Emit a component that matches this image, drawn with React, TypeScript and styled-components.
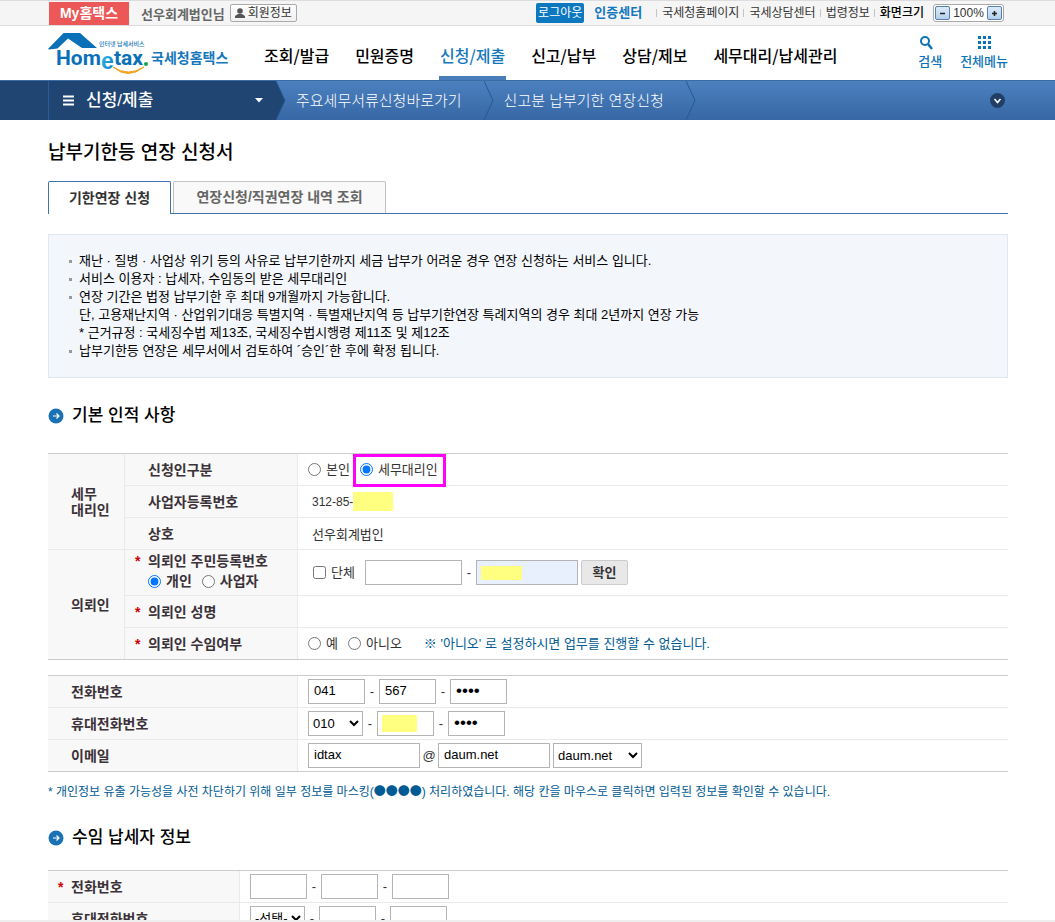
import React from 'react';
import styled, { createGlobalStyle, css } from 'styled-components';

const Global = createGlobalStyle`
  *, *::before, *::after { box-sizing: border-box; }
  html, body { margin: 0; background: #fff; }
  body, input, select, button {
    font-family: "Liberation Sans", "Noto Sans CJK KR", sans-serif;
    font-size: 13px;
    color: #333;
  }
  a { color: inherit; text-decoration: none; }
  h1, h2, ul, p { margin: 0; padding: 0; }
`;

const Shell = styled.div`
  display: flex;
  flex-direction: column;
  height: 100vh;
`;

const Scroll = styled.div`
  flex: 1;
  min-height: 0;
  overflow-y: auto;
  scrollbar-width: none;
  border-bottom: 2px solid #eeeeee;
`;

/* utility bar */

const TopBar = styled.div`
  display: flex;
  align-items: center;
  height: 26px;
  padding: 0 51px 0 49px;
  border-top: 1px solid #dddde0;
  border-bottom: 1px solid #dcdcde;
  background: #f5f5f5;
  font-size: 12px;
  line-height: 18px;
  white-space: nowrap;
`;

const MyBadge = styled.a`
  align-self: flex-end;
  width: 80px;
  height: 23px;
  background: #ec5757;
  color: #fff;
  font-size: 14px;
  font-weight: 700;
  line-height: 23px;
  text-align: center;
`;

const UserName = styled.span`
  margin: 4px 5px 0 12px;
  color: #666;
  font-size: 13px;
  font-weight: 700;
`;

const MemberButton = styled.button`
  display: flex;
  align-items: center;
  gap: 3px;
  height: 18px;
  padding: 0 4px;
  border: 1px solid #aaa;
  border-radius: 2px;
  background: linear-gradient(#fff, #f0f0f0);
  font-size: 12px;
  line-height: 16px;
`;

const TopRight = styled.div`
  display: flex;
  align-items: center;
  margin-left: auto;
`;

const Logout = styled.button`
  height: 20px;
  padding: 0 2px;
  border: 0;
  border-radius: 2px;
  background: #0d78bf;
  color: #fff;
  font-size: 12px;
  line-height: 20px;
`;

const CertLink = styled.a`
  margin: 0 10px;
  color: #1478bd;
  font-size: 13px;
  font-weight: 700;
`;

const TopLink = styled.a`
  display: flex;
  align-items: center;
  &::before {
    content: '';
    width: 1px;
    height: 8px;
    margin: 0 5px 0 4px;
    background: #c4c4c4;
  }
`;

const SizeLabel = styled(TopLink).attrs({ as: 'span' })`
  color: #000;
  font-weight: 500;
`;

const ZoomBox = styled.div`
  display: flex;
  align-items: center;
  justify-content: space-between;
  width: 71px;
  height: 18px;
  margin-left: 9px;
  padding: 0 1px;
  border: 1px solid #aaa;
  border-radius: 3px;
  background: #fff;
  line-height: 16px;
`;

const ZoomButton = styled.button`
  display: flex;
  align-items: center;
  justify-content: center;
  width: 15px;
  height: 14px;
  padding: 0;
  border: 1px solid #5a7fae;
  border-radius: 2px;
  background: linear-gradient(#dcebfa, #b4d0ee);
`;

/* main header */

const Header = styled.header`
  display: flex;
  height: 54px;
  padding: 0 47px 0 48px;
  white-space: nowrap;
`;

const LogoLink = styled.a`
  display: block;
  width: 180px;
  margin-right: 35px;
`;

const MainNav = styled.nav`
  display: flex;
  gap: 24px;
`;

const NavLink = styled.a<{ $active?: boolean }>`
  padding: 17px 1px 0;
  border-bottom: 4px solid ${(p) => (p.$active ? '#4a7ebb' : 'transparent')};
  color: ${(p) => (p.$active ? '#1478bd' : '#000')};
  font-family: "Noto Sans CJK KR", sans-serif;
  font-size: 16px;
  font-weight: 500;
  line-height: 24px;
`;

const Tools = styled.div`
  display: flex;
  gap: 18px;
  margin-left: auto;
`;

const Tool = styled.button`
  display: flex;
  flex-direction: column;
  align-items: center;
  gap: 2px;
  padding: 9px 0 0;
  border: 0;
  background: none;
  color: #0d73b8;
  font-weight: 500;
  line-height: 18px;
  svg { display: block; }
`;

/* location bar */

const CrumbBar = styled.nav`
  display: flex;
  height: 40px;
  border-top: 1px solid #3a6ba5;
  background: linear-gradient(#4b80bf, #3867a5);
  color: #fff;
  white-space: nowrap;
`;

const CrumbHome = styled.div`
  display: flex;
  width: 276px;
  padding-left: 48px;
  background: #204572;
`;

const CrumbMenu = styled.button`
  display: flex;
  flex: 1;
  align-items: center;
  padding: 0 13px 0 14px;
  border: 0;
  border-left: 1px solid #2b5a94;
  background: none;
  color: #fff;
  font-size: 17px;
  font-weight: 500;
  line-height: 38px;
`;

const MenuTitle = styled.span`
  margin: 0 auto 0 12px;
`;

const Crumb = styled.a`
  display: flex;
  align-items: center;
  padding: 0 22px 0 10px;
  font-size: 15px;
  font-weight: 300;
  line-height: 38px;
`;

const ExpandButton = styled.button`
  margin-left: auto;
  margin-right: 50px;
  padding: 0;
  border: 0;
  background: none;
  svg { display: block; }
`;

/* page content */

const Content = styled.main`
  padding: 0 47px 0 48px;
`;

const PageTitle = styled.h1`
  padding-top: 20px;
  color: #000;
  font-size: 19px;
  font-weight: 500;
  line-height: 26px;
`;

const Tabs = styled.div`
  display: flex;
  gap: 2px;
  margin-top: 15px;
  border-bottom: 1px solid #3f74b0;
`;

const Tab = styled.button<{ $w: number; $active?: boolean }>`
  min-width: ${(p) => p.$w}px;
  height: 32px;
  padding: 0 10px;
  border: 1px solid #c4c4c4;
  border-bottom: 0;
  border-radius: 2px 2px 0 0;
  background: #f9f9f9;
  color: #666;
  font-size: 14px;
  font-weight: 700;
  line-height: 31px;
  ${(p) =>
    p.$active &&
    css`
      height: 33px;
      margin-bottom: -1px;
      border-color: #3f74b0;
      background: #fff;
      color: #333;
    `}
`;

const InfoBox = styled.ul`
  margin-top: 20px;
  padding: 17px 20px;
  border: 1px solid #dfe7f0;
  background: #f3f7fc;
  list-style: none;
`;

const InfoItem = styled.li`
  display: flex;
  color: #000;
  line-height: 18px;
  &::before {
    content: '';
    width: 3px;
    height: 3px;
    margin: 8px 7px 0 0;
    background: #999;
  }
`;

const SectionTitle = styled.h2`
  display: flex;
  align-items: center;
  gap: 8px;
  color: #000;
  font-size: 17px;
  font-weight: 500;
  line-height: 24px;
`;

const FormTable = styled.table`
  width: 100%;
  border-collapse: separate;
  border-spacing: 0;
  border-top: 1px solid #ccc;
  border-bottom: 1px solid #ccc;
  table-layout: fixed;
  tr:last-child > th, tr:last-child > td {
    height: 31px;
    border-bottom: 0;
  }
  th[data-last] { border-bottom: 0; }
`;

const Col = styled.col<{ $w: number }>`
  width: ${(p) => p.$w}px;
`;

const cell = css`
  height: 32px;
  border-bottom: 1px solid #eaeaea;
  text-align: left;
`;

const GroupHead = styled.th`
  ${cell}
  padding: 0 0 0 23px;
  background: #f8f8f8;
  color: #3b3239;
  font-size: 14px;
  line-height: 16px;
`;

const RowHead = styled.th<{ $lined?: boolean; $tall?: boolean }>`
  ${cell}
  padding: 0 0 0 23px;
  border-left: ${(p) => (p.$lined ? '1px solid #eaeaea' : '0')};
  background: #f8f8f8;
  color: #3b3239;
  font-size: 14px;
  line-height: 20px;
  ${(p) => p.$tall && 'height: 46px; padding-bottom: 3px;'}
`;

const Cell = styled.td<{ $pad?: number }>`
  ${cell}
  padding: 0 0 0 ${(p) => p.$pad ?? 10}px;
  border-left: 1px solid #eaeaea;
`;

const Required = styled.span`
  display: inline-block;
  width: 13px;
  margin-left: -13px;
  color: #d00000;
`;

const Line = styled.div<{ $gap?: number; $small?: boolean }>`
  display: flex;
  align-items: center;
  gap: ${(p) => p.$gap ?? 0}px;
  font-size: ${(p) => (p.$small ? '12px' : 'inherit')};
  line-height: 20px;
`;

const Choice = styled.label<{ $marked?: boolean }>`
  display: flex;
  align-items: center;
  gap: 5px;
  input { width: 13px; height: 13px; margin: 0; }
  ${(p) =>
    p.$marked &&
    css`
      position: relative;
      &::after {
        content: '';
        position: absolute;
        inset: -6px -8px -7px -7px;
        border: 3px solid #ff00f8;
      }
    `}
`;

const Field = styled.input<{ $w: number; $filled?: boolean }>`
  width: ${(p) => p.$w}px;
  height: 25px;
  padding: 0 5px 2px;
  border: 1px solid #b4b4b4;
  border-radius: 0;
  background: ${(p) => (p.$filled ? '#e8f0fe' : '#fff')};
  color: #000;
  &[type='password'] { font-size: 17px; }
`;

const Picker = styled.select<{ $w: number }>`
  width: ${(p) => p.$w}px;
  height: 25px;
  padding: 0;
  border: 1px solid #b4b4b4;
  border-radius: 0;
  background: #fff;
  color: #000;
`;

const Sep = styled.span<{ $w?: number }>`
  width: ${(p) => p.$w ?? 14}px;
  text-align: center;
  line-height: 20px;
`;

const Masked = styled.span`
  position: relative;
  display: flex;
  align-items: center;
`;

const Mask = styled.span<{ $w: number; $h: number }>`
  width: ${(p) => p.$w}px;
  height: ${(p) => p.$h}px;
  background: #ffff80;
  ${Masked} & {
    position: absolute;
    left: 5px;
  }
`;

const ConfirmButton = styled.button`
  width: 47px;
  height: 25px;
  margin-left: 3px;
  padding: 0 0 2px;
  border: 1px solid #ccc;
  border-radius: 2px;
  background: #e8e8e8;
  font-weight: 700;
`;

const Hint = styled.span`
  margin-left: 12px;
  color: #005b94;
`;

const Note = styled.p`
  padding: 9px 0 0;
  color: #005b94;
  font-size: 12px;
  line-height: 20px;
`;

const Dots = styled.span`
  font-family: "Noto Sans CJK KR", sans-serif;
`;

const Stack = styled.div<{ $top: number }>`
  margin-top: ${(p) => p.$top}px;
`;

const Logo = () => (
  <svg width="180" height="54" viewBox="0 0 180 54" role="img" aria-label="Hometax">
    <defs>
      <linearGradient id="e" x1="0" y1="0" x2="1" y2="1">
        <stop offset="0" stopColor="#35c3ee" />
        <stop offset="1" stopColor="#0a78c0" />
      </linearGradient>
    </defs>
    <path d="M0 23 15.500 7H32L49 22H34L20 12.500 9.500 22.500 1 23.500Z" fill="#0a70b8" />
    <g fontFamily="Roboto, sans-serif" fontWeight="700" fontSize="21" fill="#0a70b8">
      <text x="8" y="39">Hom</text>
      <text x="66" y="39">tax</text>
    </g>
    <text x="53" y="43" fontFamily="'Liberation Sans', sans-serif" fontWeight="700" fontSize="23" fill="url(#e)">e</text>
    <circle cx="98" cy="38" r="2" fill="#18a34a" />
    <path d="M65 41Q80 54 96 41Q80 51 65 41Z" fill="#f5a21c" stroke="#f5a21c" />
    <g fontFamily="'Noto Sans CJK KR', sans-serif" fill="#1577bb">
      <text x="51" y="20" fontSize="6" fontWeight="500">인터넷 납세서비스</text>
      <text x="103" y="37" fontSize="14" fontWeight="700">국세청홈택스</text>
    </g>
  </svg>
);

const Chevron = ({ first }: { first?: boolean }) => (
  <svg width="10" height="39" viewBox="0 0 10 39">
    {first && <path d="M0 0 9 19.500 0 39Z" fill="#204572" />}
    <path d="M0 0 9 19.500 0 39" fill="none" stroke="#235a92" />
  </svg>
);

const ArrowBullet = () => (
  <svg width="16" height="16" viewBox="0 0 16 16">
    <circle cx="8" cy="8" r="7.500" fill="#1a72b4" />
    <path d="M5 8H10.500M8.500 5.500 11 8 8.500 10.500" fill="none" stroke="#fff" strokeWidth="1.200" />
  </svg>
);

const Phone = ({ name, values }: { name: string; values: string[] }) => (
  <Line>
    <Field $w={57} aria-label={`${name} 1`} defaultValue={values[0]} />
    <Sep>-</Sep>
    <Field $w={57} aria-label={`${name} 2`} defaultValue={values[1]} />
    <Sep>-</Sep>
    <Field $w={57} type="password" aria-label={`${name} 3`} defaultValue={values[2]} />
  </Line>
);

const links = ['국세청홈페이지', '국세상담센터', '법령정보'];
const menus = ['조회/발급', '민원증명', '신청/제출', '신고/납부', '상담/제보', '세무대리/납세관리'];

export default function App() {
  return (
    <Shell>
      <Global />
      <Scroll>
        <TopBar>
          <MyBadge href="#">My홈택스</MyBadge>
          <UserName>선우회계법인님</UserName>
          <MemberButton>
            <svg width="10" height="10" viewBox="0 0 10 10" fill="#555">
              <circle cx="5" cy="3" r="2.800" />
              <path d="M0 10V8L3 6H7L10 8V10Z" />
            </svg>
            회원정보
          </MemberButton>
          <TopRight>
            <Logout>로그아웃</Logout>
            <CertLink href="#">인증센터</CertLink>
            {links.map((l) => (
              <TopLink href="#" key={l}>{l}</TopLink>
            ))}
            <SizeLabel>화면크기</SizeLabel>
            <ZoomBox>
              <ZoomButton aria-label="축소">
                <svg width="7" height="7"><path d="M1 3.500H6" stroke="#222" strokeWidth="1.500" /></svg>
              </ZoomButton>
              100%
              <ZoomButton aria-label="확대">
                <svg width="7" height="7"><path d="M1 3.500H6M3.500 1V6" stroke="#222" strokeWidth="1.500" /></svg>
              </ZoomButton>
            </ZoomBox>
          </TopRight>
        </TopBar>

        <Header>
          <LogoLink href="#"><Logo /></LogoLink>
          <MainNav>
            {menus.map((m) => (
              <NavLink href="#" key={m} $active={m === '신청/제출'}>{m}</NavLink>
            ))}
          </MainNav>
          <Tools>
            <Tool>
              <svg width="24" height="16" viewBox="0 0 24 16" fill="none" stroke="#0d73b8">
                <circle cx="7" cy="6" r="4" strokeWidth="2" />
                <path d="M10 9 14 14" strokeWidth="2.500" />
              </svg>
              검색
            </Tool>
            <Tool>
              <svg width="13" height="16" viewBox="0 0 13 16" fill="#0d73b8">
                {[1, 6, 11].map((y) => [0, 5, 10].map((x) => (
                  <rect key={`${x}-${y}`} x={x} y={y} width="3" height="3" />
                )))}
              </svg>
              전체메뉴
            </Tool>
          </Tools>
        </Header>

        <CrumbBar>
          <CrumbHome>
            <CrumbMenu>
              <svg width="11" height="11"><path d="M0 1.500H11M0 5.500H11M0 9.500H11" stroke="#fff" strokeWidth="2" /></svg>
              <MenuTitle>신청/제출</MenuTitle>
              <svg width="8" height="5"><path d="M0 0H8L4 4.500Z" fill="#fff" /></svg>
            </CrumbMenu>
          </CrumbHome>
          <Chevron first />
          <Crumb href="#">주요세무서류신청바로가기</Crumb>
          <Chevron />
          <Crumb href="#">신고분 납부기한 연장신청</Crumb>
          <Chevron />
          <ExpandButton aria-label="펼치기">
            <svg width="15" height="15" viewBox="0 0 15 15">
              <circle cx="7.500" cy="7.500" r="7.500" fill="#213f66" />
              <path d="M4.500 6 7.500 9.500 10.500 6" fill="none" stroke="#fff" strokeWidth="1.500" />
            </svg>
          </ExpandButton>
        </CrumbBar>

        <Content>
          <PageTitle>납부기한등 연장 신청서</PageTitle>
          <Tabs role="tablist">
            <Tab role="tab" aria-selected $w={123} $active>기한연장 신청</Tab>
            <Tab role="tab" $w={213}>연장신청/직권연장 내역 조회</Tab>
          </Tabs>

          <InfoBox>
            <InfoItem>재난 · 질병 · 사업상 위기 등의 사유로 납부기한까지 세금 납부가 어려운 경우 연장 신청하는 서비스 입니다.</InfoItem>
            <InfoItem>서비스 이용자 : 납세자, 수임동의 받은 세무대리인</InfoItem>
            <InfoItem>
              <div>
                연장 기간은 법정 납부기한 후 최대 9개월까지 가능합니다.<br />
                단, 고용재난지역 · 산업위기대응 특별지역 · 특별재난지역 등 납부기한연장 특례지역의 경우 최대 2년까지 연장 가능<br />
                * 근거규정 : 국세징수법 제13조, 국세징수법시행령 제11조 및 제12조
              </div>
            </InfoItem>
            <InfoItem>납부기한등 연장은 세무서에서 검토하여 ´승인´한 후에 확정 됩니다.</InfoItem>
          </InfoBox>

          <Stack $top={26}>
            <SectionTitle><ArrowBullet />기본 인적 사항</SectionTitle>
          </Stack>
          <Stack $top={25}>
            <FormTable>
              <colgroup><Col $w={76} /><Col $w={173} /><col /></colgroup>
              <tbody>
                <tr>
                  <GroupHead rowSpan={3} scope="rowgroup">세무<br />대리인</GroupHead>
                  <RowHead $lined scope="row">신청인구분</RowHead>
                  <Cell>
                    <Line $gap={10}>
                      <Choice><input type="radio" name="who" />본인</Choice>
                      <Choice $marked><input type="radio" name="who" defaultChecked />세무대리인</Choice>
                    </Line>
                  </Cell>
                </tr>
                <tr>
                  <RowHead $lined scope="row">사업자등록번호</RowHead>
                  <Cell $pad={14}><Line $small>312-85-<Mask $w={40} $h={19} /></Line></Cell>
                </tr>
                <tr>
                  <RowHead $lined scope="row">상호</RowHead>
                  <Cell $pad={14}>선우회계법인</Cell>
                </tr>
                <tr>
                  <GroupHead rowSpan={3} scope="rowgroup" data-last>의뢰인</GroupHead>
                  <RowHead $lined $tall scope="row">
                    <Required>*</Required>의뢰인 주민등록번호
                    <Line $gap={10}>
                      <Choice><input type="radio" name="kind" defaultChecked />개인</Choice>
                      <Choice><input type="radio" name="kind" />사업자</Choice>
                    </Line>
                  </RowHead>
                  <Cell $pad={15}>
                    <Line>
                      <Choice><input type="checkbox" />단체</Choice>
                      <Sep $w={10} />
                      <Field $w={97} aria-label="주민등록번호 앞자리" />
                      <Sep>-</Sep>
                      <Masked>
                        <Field $w={102} $filled aria-label="주민등록번호 뒷자리" />
                        <Mask $w={41} $h={14} />
                      </Masked>
                      <ConfirmButton>확인</ConfirmButton>
                    </Line>
                  </Cell>
                </tr>
                <tr>
                  <RowHead $lined scope="row"><Required>*</Required>의뢰인 성명</RowHead>
                  <Cell />
                </tr>
                <tr>
                  <RowHead $lined scope="row"><Required>*</Required>의뢰인 수임여부</RowHead>
                  <Cell>
                    <Line $gap={10}>
                      <Choice><input type="radio" name="accept" />예</Choice>
                      <Choice><input type="radio" name="accept" />아니오</Choice>
                      <Hint>※ '아니오' 로 설정하시면 업무를 진행할 수 없습니다.</Hint>
                    </Line>
                  </Cell>
                </tr>
              </tbody>
            </FormTable>
          </Stack>

          <Stack $top={15}>
            <FormTable>
              <colgroup><Col $w={249} /><col /></colgroup>
              <tbody>
                <tr>
                  <RowHead scope="row">전화번호</RowHead>
                  <Cell><Phone name="전화번호" values={['041', '567', '0000']} /></Cell>
                </tr>
                <tr>
                  <RowHead scope="row">휴대전화번호</RowHead>
                  <Cell>
                    <Line>
                      <Picker $w={55} aria-label="휴대전화 앞자리"><option>010</option></Picker>
                      <Sep>-</Sep>
                      <Masked>
                        <Field $w={57} aria-label="휴대전화 가운데자리" />
                        <Mask $w={35} $h={17} />
                      </Masked>
                      <Sep>-</Sep>
                      <Field $w={57} type="password" aria-label="휴대전화 끝자리" defaultValue="0000" />
                    </Line>
                  </Cell>
                </tr>
                <tr>
                  <RowHead scope="row">이메일</RowHead>
                  <Cell>
                    <Line>
                      <Field $w={112} aria-label="이메일 아이디" defaultValue="idtax" />
                      <Sep $w={18}>@</Sep>
                      <Field $w={112} aria-label="이메일 도메인" defaultValue="daum.net" />
                      <Sep $w={3} />
                      <Picker $w={89} aria-label="도메인 선택"><option>daum.net</option></Picker>
                    </Line>
                  </Cell>
                </tr>
              </tbody>
            </FormTable>
          </Stack>
          <Note>* 개인정보 유출 가능성을 사전 차단하기 위해 일부 정보를 마스킹(<Dots>●●●●</Dots>) 처리하였습니다. 해당 칸을 마우스로 클릭하면 입력된 정보를 확인할 수 있습니다.</Note>

          <Stack $top={24}>
            <SectionTitle><ArrowBullet />수임 납세자 정보</SectionTitle>
          </Stack>
          <Stack $top={20}>
            <FormTable>
              <colgroup><Col $w={191} /><col /></colgroup>
              <tbody>
                <tr>
                  <RowHead scope="row"><Required>*</Required>전화번호</RowHead>
                  <Cell><Phone name="납세자 전화번호" values={['', '', '']} /></Cell>
                </tr>
                <tr>
                  <RowHead scope="row">휴대전화번호</RowHead>
                  <Cell>
                    <Line>
                      <Picker $w={55} aria-label="납세자 휴대전화 앞자리"><option>-선택-</option></Picker>
                      <Sep>-</Sep>
                      <Field $w={57} aria-label="납세자 휴대전화 가운데자리" />
                      <Sep>-</Sep>
                      <Field $w={57} aria-label="납세자 휴대전화 끝자리" />
                    </Line>
                  </Cell>
                </tr>
              </tbody>
            </FormTable>
          </Stack>
        </Content>
      </Scroll>
    </Shell>
  );
}
